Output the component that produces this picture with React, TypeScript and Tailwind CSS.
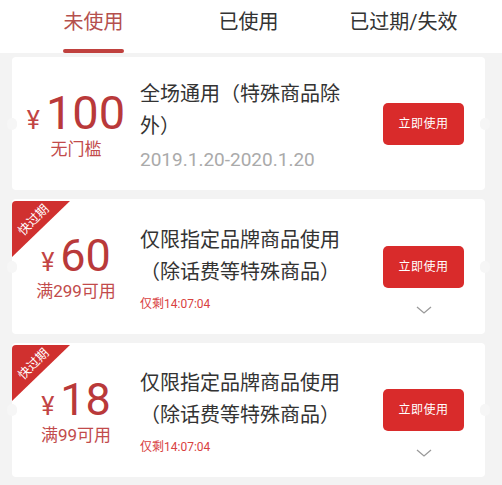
const font = { fontFamily: 'Roboto, "Noto Sans CJK SC", sans-serif' };

type Coupon = {
  amount: string;
  sub: string;
  title: string;
  date?: string;
  left?: string;
  soon?: boolean;
  height: string;
};

const coupons: Coupon[] = [
  { amount: '100', sub: '无门槛', title: '全场通用（特殊商品除外）', date: '2019.1.20-2020.1.20', height: 'h-[133px]' },
  { amount: '60', sub: '满299可用', title: '仅限指定品牌商品使用（除话费等特殊商品）', left: '仅剩14:07:04', soon: true, height: 'h-[135px]' },
  { amount: '18', sub: '满99可用', title: '仅限指定品牌商品使用（除话费等特殊商品）', left: '仅剩14:07:04', soon: true, height: 'h-[134px]' },
];

export default function App() {
  return (
    <div className="w-[502px] h-[485px] overflow-hidden bg-[#f3f3f3]" style={font}>
      {/* Tabs */}
      <div className="h-[53px] bg-white">
        <div className="ml-[16px] w-[465px] grid grid-cols-3 text-[20px] leading-none">
          <div className="flex flex-col items-center pt-[12px]">
            <span className="text-[#b5504d]">未使用</span>
            <span className="mt-[17px] w-[61px] h-[4px] rounded-full bg-[#c0413e]" />
          </div>
          <div className="flex justify-center pt-[12px] text-[#333]">已使用</div>
          <div className="flex justify-center pt-[12px] text-[#333]">已过期/失效</div>
        </div>
      </div>

      {/* Coupons */}
      <div className="pl-[12px] pr-[17px] pt-[4px] flex flex-col gap-[9px]">
        {coupons.map((c, i) => (
          <CouponCard key={i} c={c} />
        ))}
      </div>
    </div>
  );
}

function CouponCard({ c }: { c: Coupon }) {
  return (
    <div className={`relative ${c.height} bg-white rounded-[4px] flex items-center`}>
      {/* side notches */}
      <span className="absolute left-[-5px] top-1/2 -translate-y-1/2 w-[10px] h-[12px] rounded-full bg-[#f6f6f6]" />
      <span className="absolute right-[-5px] top-1/2 -translate-y-1/2 w-[10px] h-[12px] rounded-full bg-[#f6f6f6]" />

      {c.soon && (
        <div className="absolute left-0 top-[2px] w-[58px] h-[56px] overflow-hidden rounded-tl-[4px]">
          <svg width="58" height="56" viewBox="0 0 58 56" className="absolute inset-0">
            <polygon points="0,0 58,0 0,56" fill="#d0302f" />
          </svg>
          <span className="absolute left-[3px] top-[13px] -rotate-45 text-white text-[12.5px] leading-none whitespace-nowrap">
            快过期
          </span>
        </div>
      )}

      {/* Amount */}
      <div className="w-[128px] shrink-0 flex flex-col items-center">
        <div className="flex items-baseline text-[#b9393a] leading-none">
          <span className="text-[25px] mr-[6px] text-[#c24444]">¥</span>
          <span className={c.amount === '100' ? 'text-[47px]' : 'text-[45px]'}>{c.amount}</span>
        </div>
        <div className="mt-[5px] text-[17px] leading-none text-[#c24b4b]">{c.sub}</div>
      </div>

      {/* Title */}
      <div className="w-[208px] shrink-0">
        <div className="text-[20px] leading-[32px] text-[#333]">{c.title}</div>
        {c.date && <div className="mt-[8px] text-[19px] leading-none text-[#aaa]">{c.date}</div>}
        {c.left && <div className="mt-[10px] text-[12px] leading-none text-[#d9423f]">{c.left}</div>}
      </div>

      {/* Action */}
      <div className="ml-auto mr-[21px] relative">
        <button className="w-[81px] h-[42px] rounded-[5px] bg-[#d92b2b] text-white text-[12px] tracking-[0.5px]">
          立即使用
        </button>
        {c.soon && (
          <svg width="16" height="8" viewBox="0 0 16 8" className="absolute left-[33px] top-full mt-[18px]">
            <polyline points="1,1 8,7 15,1" fill="none" stroke="#9a9a9a" strokeWidth="1.3" />
          </svg>
        )}
      </div>
    </div>
  );
}
